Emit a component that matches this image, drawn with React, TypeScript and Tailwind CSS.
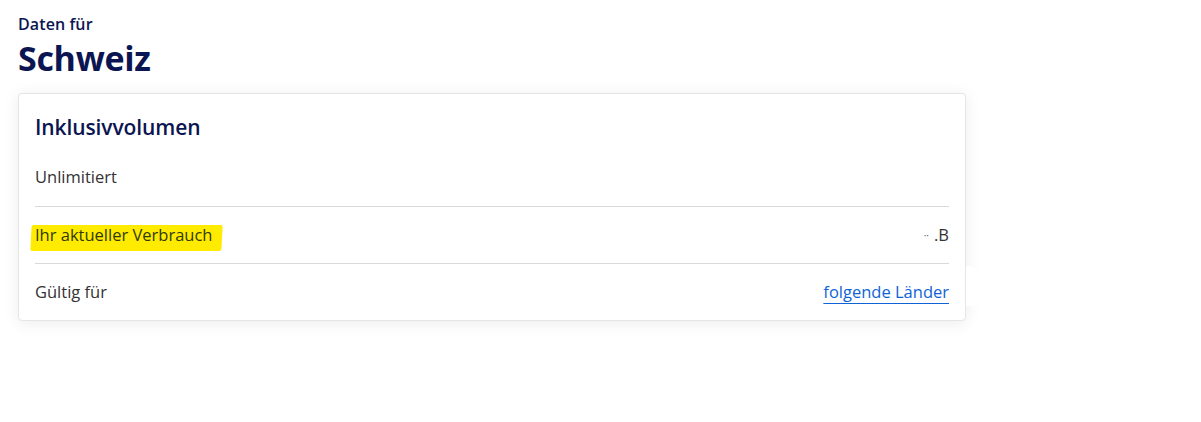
import React from "react";

export default function App() {
  return (
    <div
      className="min-h-[422px] w-[1201px] bg-white pl-[18px] pt-[13px] text-[#333333]"
      style={{ fontFamily: '"Open Sans", "Noto Sans", sans-serif' }}
    >
      <div className="text-[16px] font-semibold leading-[22px] tracking-[0.1px] text-[#0b1551]">Daten für</div>
      <div className="mt-[1px] text-[34px] font-bold leading-[44px] tracking-[-0.3px] text-[#0b1551]">Schweiz</div>
      <div className="relative mt-[13px] w-[948px] rounded-[4px] border border-[#e3e5e8] bg-white px-4 shadow-[0_2px_16px_rgba(0,0,0,0.08)]">
        <div className="h-[55px] pt-[19px] text-[21px] font-semibold leading-[28px] tracking-[-0.1px] text-[#0b1551]">Inklusivvolumen</div>
        <div className="flex h-[57px] items-center text-[16.5px]">Unlimitiert</div>
        <div className="flex h-[57px] items-center justify-between border-t border-[#d9d9d9] text-[16.5px]">
          <span className="relative">
            <span className="absolute -left-[4px] -right-[10px] top-[2px] bottom-[-3px] -skew-x-3 rounded-[2px] bg-[#ffeb00]" />
            <span className="relative text-[#2f3a0a]">Ihr aktueller Verbrauch</span>
          </span>
          <span className="flex items-center">
            <span className="mr-[5px] text-[10px] leading-none text-[#555]">··</span>
            <span>.B</span>
          </span>
        </div>
        <div className="flex h-[57px] items-center justify-between border-t border-[#d9d9d9] text-[16.5px]">
          <span>Gültig für</span>
          <a href="#" className="text-[#1063d6] underline decoration-[#1063d6] underline-offset-[5px]">
            folgende Länder
          </a>
        </div>
        <svg className="absolute left-[947px] top-[172px]" width="24" height="40" viewBox="0 0 24 40">
          <polygon points="0,0 6,0 20,10 12,40 0,40" fill="#ffffff" />
        </svg>
      </div>
    </div>
  );
}
